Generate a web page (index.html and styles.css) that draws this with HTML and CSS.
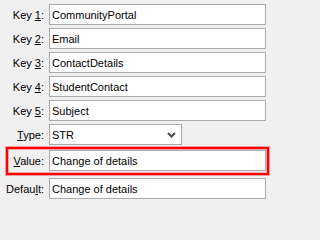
FILE: index.html
```html
<!DOCTYPE html>
<html>
<head>
<meta charset="utf-8">
<link rel="stylesheet" href="styles.css">
</head>
<body>
<div class="form">
  <div class="row"><label class="lbl">Key <u>1</u>:</label><input class="field" type="text" value="CommunityPortal"></div>
  <div class="row"><label class="lbl">Key <u>2</u>:</label><input class="field" type="text" value="Email"></div>
  <div class="row"><label class="lbl">Key <u>3</u>:</label><input class="field" type="text" value="ContactDetails"></div>
  <div class="row"><label class="lbl">Key <u>4</u>:</label><input class="field" type="text" value="StudentContact"></div>
  <div class="row"><label class="lbl">Key <u>5</u>:</label><input class="field" type="text" value="Subject"></div>
  <div class="row"><label class="lbl"><u>T</u>ype:</label>
    <div class="select"><span class="select-text">STR</span>
      <svg class="chev" width="9" height="6" viewBox="0 0 9 6"><path d="M1 1 L4.5 4.5 L8 1" fill="none" stroke="#4a4a4a" stroke-width="2"/></svg>
    </div>
  </div>
  <div class="row row-hl"><label class="lbl lbl-hl"><u>V</u>alue:</label><input class="field field-hl" type="text" value="Change of details"></div>
  <div class="row"><label class="lbl">Defau<u>l</u>t:</label><input class="field" type="text" value="Change of details"></div>
</div>
</body>
</html>
```
FILE: styles.css
```css
html, body {
  margin: 0;
  padding: 0;
  background: #f0f0f0;
}
body {
  font-family: "Liberation Sans", Arial, sans-serif;
  font-size: 11px;
  color: #000;
}
.form {
  box-sizing: border-box;
  width: 271px;
  display: flex;
  flex-direction: column;
  gap: 3px;
  padding: 4px 2px 0 6px;
}
.row {
  display: flex;
  align-items: center;
  height: 21px;
}
.lbl {
  width: 38px;
  text-align: right;
  white-space: nowrap;
  padding-right: 5px;
  flex: none;
}
.lbl u {
  text-decoration-thickness: 1px;
  text-underline-offset: 1px;
}
.field {
  box-sizing: border-box;
  height: 21px;
  width: 217px;
  margin: 0;
  border: 1px solid #ababab;
  background: #fff;
  padding: 0 2px;
  font-family: "Liberation Sans", Arial, sans-serif;
  font-size: 11px;
  color: #000;
  outline: none;
}
.select {
  box-sizing: border-box;
  height: 21px;
  width: 133px;
  border: 1px solid #ababab;
  background: #fff;
  display: flex;
  align-items: center;
  justify-content: space-between;
  padding: 0 5px 0 2px;
}
.chev {
  display: block;
  margin-top: 1px;
}
.row-hl {
  box-sizing: border-box;
  height: 28px;
  margin-top: -1px;
  border: 2px solid #ff0000;
  box-shadow: 0 0 0 1px rgba(255, 0, 0, 0.35), inset 0 0 0 1px rgba(255, 0, 0, 0.3);
  padding: 0 1px 1px 0;
  align-items: center;
}
.lbl-hl {
  width: 36px;
}
```
